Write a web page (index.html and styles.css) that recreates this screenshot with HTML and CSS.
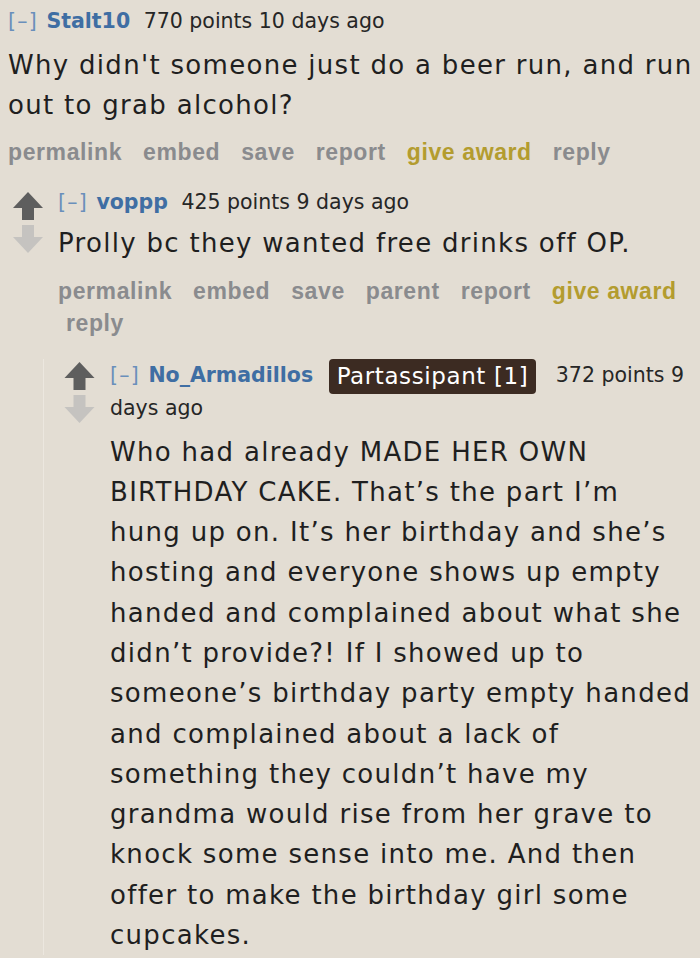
FILE: index.html
```html
<!DOCTYPE html>
<html lang="en">
<head>
    <meta charset="UTF-8">
    <meta name="viewport" content="width=device-width, initial-scale=1.0">
    <title>Comments</title>
    <link rel="stylesheet" href="styles.css">
</head>
<body>
    <div class="thing top">
        <div class="entry">
            <p class="tagline">
                <a class="expand">[–]</a>
                <a class="author">Stalt10</a>
                <span class="score">770 points</span> <span>10 days ago</span>
            </p>
            <div class="md">Why didn't someone just do a beer run, and run out to grab alcohol?</div>
            <ul class="flat-list buttons">
                <li><a>permalink</a></li>
                <li><a>embed</a></li>
                <li><a>save</a></li>
                <li><a>report</a></li>
                <li><a class="award">give award</a></li>
                <li><a>reply</a></li>
            </ul>
        </div>

        <div class="thing reply-one">
            <div class="row">
                <div class="midcol">
                    <svg class="arrow up" viewBox="0 0 30 28"><path d="M15 0 L30 16 L21 16 L21 28 L9 28 L9 16 L0 16 Z"/></svg>
                    <svg class="arrow down" viewBox="0 0 30 28"><path d="M9 0 L21 0 L21 12 L30 12 L15 28 L0 12 L9 12 Z"/></svg>
                </div>
                <div class="entry">
                    <p class="tagline">
                        <a class="expand">[–]</a>
                        <a class="author">voppp</a>
                        <span class="score">425 points</span> <span>9 days ago</span>
                    </p>
                    <div class="md">Prolly bc they wanted free drinks off OP.</div>
                    <ul class="flat-list buttons">
                        <li><a>permalink</a></li>
                        <li><a>embed</a></li>
                        <li><a>save</a></li>
                        <li><a>parent</a></li>
                        <li><a>report</a></li>
                        <li><a class="award">give award</a></li>
                        <li><a>reply</a></li>
                    </ul>
                </div>
            </div>

            <div class="child">
                <div class="thing reply-two">
                    <div class="row">
                        <div class="midcol">
                            <svg class="arrow up" viewBox="0 0 30 28"><path d="M15 0 L30 16 L21 16 L21 28 L9 28 L9 16 L0 16 Z"/></svg>
                            <svg class="arrow down" viewBox="0 0 30 28"><path d="M9 0 L21 0 L21 12 L30 12 L15 28 L0 12 L9 12 Z"/></svg>
                        </div>
                        <div class="entry">
                            <p class="tagline">
                                <a class="expand">[–]</a>
                                <a class="author">No_Armadillos</a>
                                <span class="flair">Partassipant [1]</span>
                                <span class="score">372 points</span> <span>9 days ago</span>
                            </p>
                            <div class="md">Who had already MADE HER OWN BIRTHDAY CAKE. That’s the part I’m hung up on. It’s her birthday and she’s hosting and everyone shows up empty handed and complained about what she didn’t provide?! If I showed up to someone’s birthday party empty handed and complained about a lack of something they couldn’t have my grandma would rise from her grave to knock some sense into me. And then offer to make the birthday girl some cupcakes.</div>
                        </div>
                    </div>
                </div>
            </div>
        </div>
    </div>
</body>
</html>
```

FILE: styles.css
```css
body {
    margin: 0;
    background-color: #e3ddd3;
    font-family: "DejaVu Sans", Verdana, sans-serif;
    color: #1f1f1f;
    overflow: hidden;
}

.top {
    padding: 5px 0 0 8px;
}

.tagline {
    margin: 0;
    font-size: 20.5px;
    line-height: 32px;
    color: #262626;
}

.tagline .expand {
    color: #6a8fbb;
    letter-spacing: 1.2px;
    margin-right: 2px;
}

.tagline .author {
    color: #3f6ea3;
    font-weight: bold;
    margin-right: 7px;
}

.md {
    font-size: 26px;
    letter-spacing: 1.3px;
    line-height: 40px;
    margin-top: 8px;
}

.flat-list {
    list-style: none;
    margin: 0;
    padding: 0;
    display: flex;
    flex-wrap: wrap;
    font-family: "Liberation Sans", Arial, sans-serif;
    font-weight: bold;
    font-size: 23px;
    letter-spacing: 0.6px;
    line-height: 32px;
}

.flat-list li {
    padding: 0 13px 0 8px;
}

.flat-list li:first-child {
    padding-left: 0;
}

.flat-list a {
    color: #8a8b8e;
}

.flat-list a.award {
    color: #b39c2f;
}

.buttons {
    margin-top: 11px;
}

.row {
    display: flex;
}

.midcol {
    display: flex;
    flex-direction: column;
    flex-shrink: 0;
}

.arrow {
    display: block;
    width: 30px;
    height: 28px;
}

.arrow.up {
    fill: #5e5e5e;
}

.arrow.down {
    fill: #c5c3c0;
    margin-top: 5px;
}

.reply-one {
    margin-top: 18px;
}

.reply-one > .row > .midcol {
    margin: 6px 15px 0 5px;
}

.reply-one .md {
    margin-top: 5px;
}

.reply-one .buttons {
    margin-top: 12px;
}

.child {
    margin-left: 35px;
    margin-top: 20px;
    border-left: 1px solid #ece7df;
    padding-left: 20px;
}

.reply-two .midcol {
    margin: 3px 15px 0 0;
}

.reply-two .arrow {
    width: 31px;
}

.flair {
    display: inline-block;
    background-color: #3c2b22;
    color: #ffffff;
    font-size: 23px;
    letter-spacing: 0.6px;
    line-height: 27px;
    padding: 4px 8px;
    margin: -2px 13px -2px 2px;
    border-radius: 4px;
    vertical-align: middle;
}

.reply-two .md {
    margin-top: 8px;
    padding-right: 8px;
    line-height: 40.3px;
}
```
